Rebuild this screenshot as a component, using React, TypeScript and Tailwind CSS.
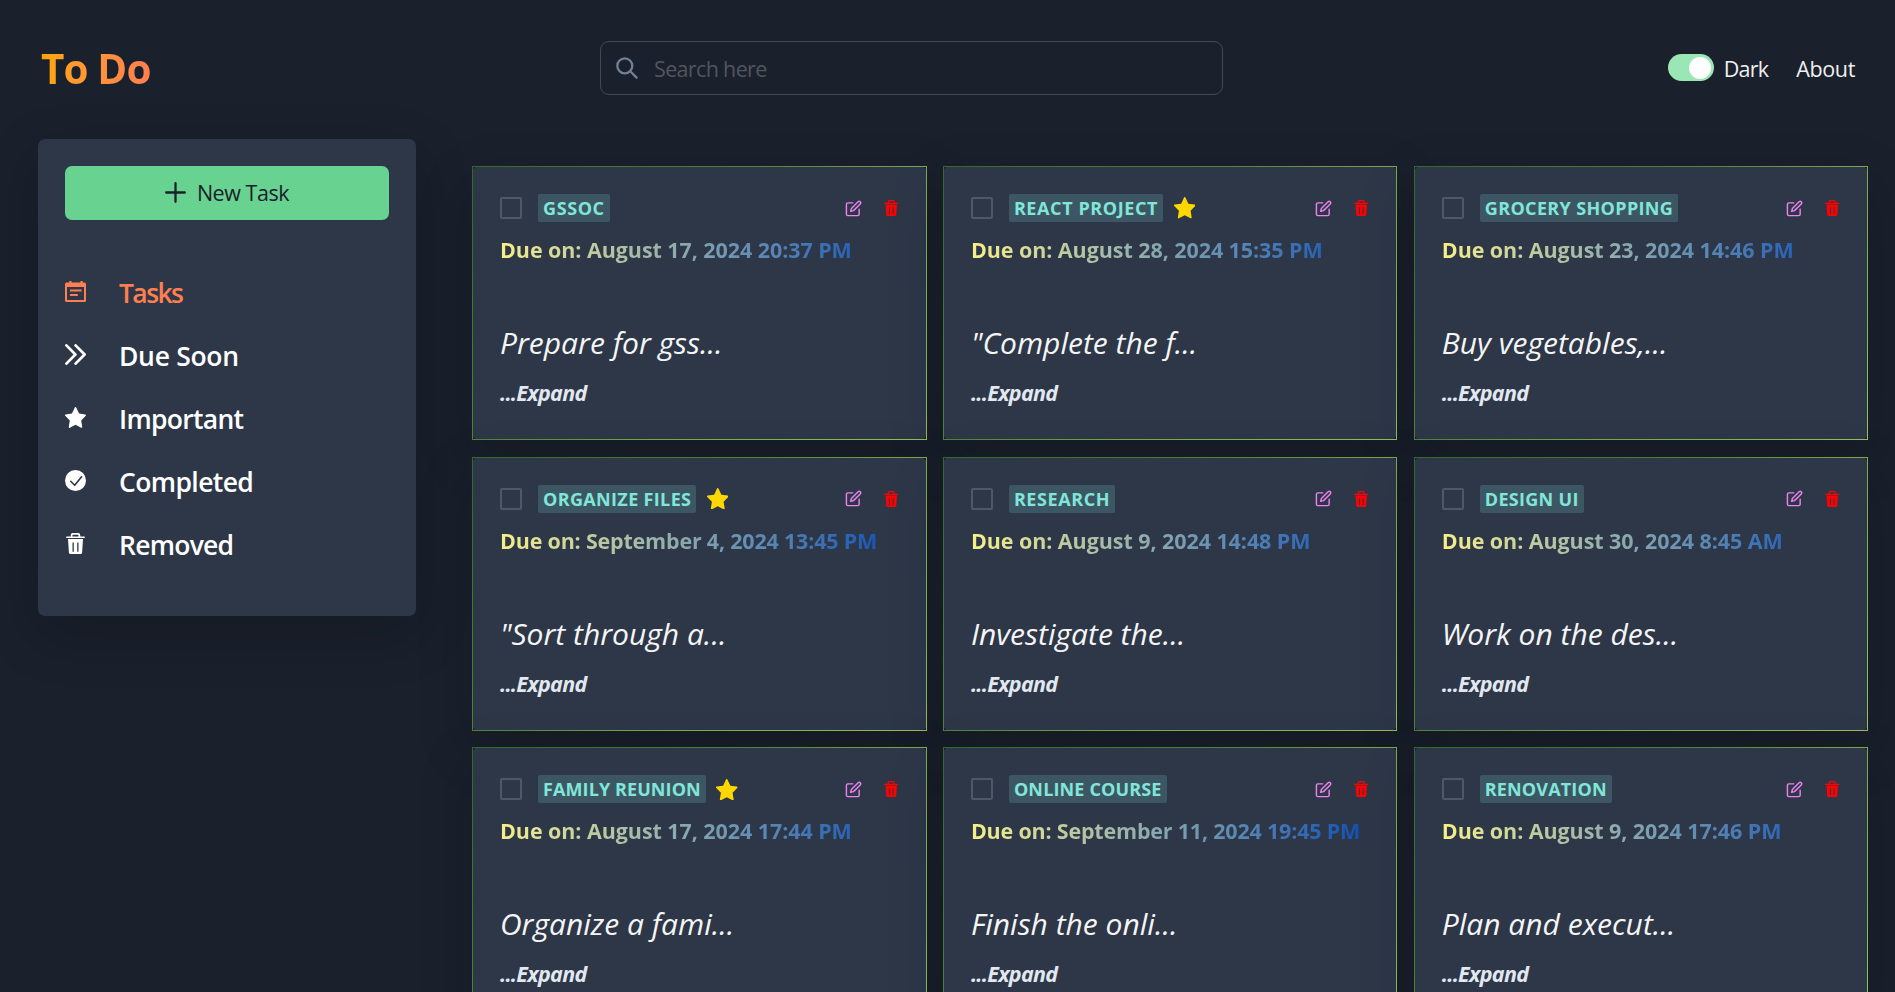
import { FiEdit } from "react-icons/fi";

type Task = { tag: string; due: string; text: string; starred?: boolean; tracking: string };

const tasks: Task[] = [
  { tag: "GSSOC", due: "August 17, 2024 20:37 PM", text: "Prepare for gss...", tracking: "tracking-[0.6px]" },
  { tag: "REACT PROJECT", due: "August 28, 2024 15:35 PM", text: '"Complete the f...', starred: true, tracking: "tracking-[0.6px]" },
  { tag: "GROCERY SHOPPING", due: "August 23, 2024 14:46 PM", text: "Buy vegetables,...", tracking: "tracking-[0.35px]" },
  { tag: "ORGANIZE FILES", due: "September 4, 2024 13:45 PM", text: '"Sort through a...', starred: true, tracking: "tracking-[0.35px]" },
  { tag: "RESEARCH", due: "August 9, 2024 14:48 PM", text: "Investigate the...", tracking: "tracking-[0.6px]" },
  { tag: "DESIGN UI", due: "August 30, 2024 8:45 AM", text: "Work on the des...", tracking: "tracking-[0.3px]" },
  { tag: "FAMILY REUNION", due: "August 17, 2024 17:44 PM", text: "Organize a fami...", starred: true, tracking: "tracking-[0.1px]" },
  { tag: "ONLINE COURSE", due: "September 11, 2024 19:45 PM", text: "Finish the onli...", tracking: "tracking-[0.15px]" },
  { tag: "RENOVATION", due: "August 9, 2024 17:46 PM", text: "Plan and execut...", tracking: "tracking-[0.15px]" },
];

function StarIcon({ className }: { className?: string }) {
  return (
    <svg viewBox="88 64 848 818" preserveAspectRatio="none" fill="currentColor" className={className}>
      <path d="M908.1 353.1l-253.9-36.9L540.7 86.1c-3.1-6.3-8.2-11.4-14.5-14.5-15.8-7.8-35-1.3-42.9 14.5L369.8 316.2l-253.9 36.9c-7 1-13.4 4.3-18.3 9.3a32.05 32.05 0 0 0 .6 45.3l183.7 179.1-43.4 252.9a31.95 31.95 0 0 0 46.4 33.7L512 754l227.1 119.4c6.2 3.3 13.4 4.4 20.3 3.2 17.4-3 29.1-19.5 26.1-36.9l-43.4-252.9 183.7-179.1c5-4.9 8.3-11.3 9.3-18.3 2.7-17.5-9.5-33.7-27-36.3z" />
    </svg>
  );
}

function TrashIcon({ className }: { className?: string }) {
  return (
    <svg viewBox="0 0 19 21" className={className}>
      <path d="M5.6 4V2.2Q5.6.9 6.9.9h5.2q1.3 0 1.3 1.3V4" fill="none" stroke="currentColor" strokeWidth="1.7" />
      <path d="M0 4.3Q0 3.5.8 3.5h17.4q.8 0 .8.8t-.8.8H.8Q0 5.1 0 4.3z" fill="currentColor" />
      <path
        fillRule="evenodd"
        fill="currentColor"
        d="M2 6h15l-.9 13.5q-.1 1.5-1.6 1.5h-10q-1.5 0-1.6-1.5zM6.5 9.6v9.2h1.3V9.6zM11.2 9.6v9.2h1.3V9.6z"
      />
    </svg>
  );
}

function CalendarIcon() {
  return (
    <svg viewBox="0 0 21 21" className="h-[21px] w-[21px]">
      <path
        fill="currentColor"
        fillRule="evenodd"
        d="M4.3 0h2.2v1.6h9V0h2.2v1.6h1.8Q21 1.6 21 3.1v16.4q0 1.5-1.5 1.5h-18Q0 21 0 19.5V3.1Q0 1.6 1.5 1.6h2.8zM2 6v13h17V6z"
      />
      <path d="M5 9.6h11.6M5 14h7.8" stroke="currentColor" strokeWidth="2" />
    </svg>
  );
}

function ChevronsIcon() {
  return (
    <svg viewBox="0 0 21 21" className="h-[21px] w-[21px]" fill="none" stroke="currentColor" strokeWidth="2.7" strokeLinecap="round" strokeLinejoin="round">
      <path d="M1.4 1.4l9 9.1-9 9.1M10.6 1.4l9 9.1-9 9.1" />
    </svg>
  );
}

function CheckIcon() {
  return (
    <svg viewBox="0 0 21 21" className="h-[21px] w-[21px]">
      <circle cx="10.5" cy="10.5" r="10.5" fill="currentColor" />
      <path d="M5.7 11.3l4 4 6.9-8.5" fill="none" stroke="#2d3748" strokeWidth="1.6" strokeLinecap="round" strokeLinejoin="round" />
    </svg>
  );
}

const nav = [
  { label: "Tasks", icon: <CalendarIcon />, style: "text-[#ff7f50] tracking-[-1.6px]" },
  { label: "Due Soon", icon: <ChevronsIcon />, style: "text-white tracking-[-0.3px]" },
  { label: "Important", icon: <StarIcon className="h-[21px] w-[21px]" />, style: "text-white tracking-[-0.7px]" },
  { label: "Completed", icon: <CheckIcon />, style: "text-white tracking-[-0.6px]" },
  { label: "Removed", icon: <TrashIcon className="h-[21px] w-[19px]" />, style: "text-white tracking-[-0.75px]" },
];

function Header() {
  return (
    <header className="flex h-[136px] shrink-0 items-center pr-[40px] pl-[41px]">
      <div className="w-[559px] pt-[2px]">
        <h1 className="inline-block bg-linear-to-r from-[#ffa500] to-[#ff7f50] bg-clip-text text-[40.5px] leading-[60px] font-bold tracking-[-0.9px] text-transparent">
          To Do
        </h1>
      </div>
      <div className="flex h-[54px] w-[623px] items-center gap-[16px] rounded-[9px] border border-white/18 pl-[15px]">
        <svg viewBox="0 0 22 22" className="h-[22px] w-[22px] text-[#718096]" fill="none" stroke="currentColor" strokeWidth="2.3" strokeLinecap="round">
          <circle cx="8.8" cy="8.8" r="7.5" />
          <path d="M14.2 14.2l6.4 6.4" />
        </svg>
        <span className="pt-[2px] text-[21.5px] leading-8 tracking-[-0.65px] text-[#51565f]">Search here</span>
      </div>
      <div className="ml-auto flex items-center">
        <div className="mb-px flex h-[27px] w-[46px] items-center justify-end rounded-full bg-[#9ae6b4] pr-[3px]">
          <div className="h-[22px] w-[22px] rounded-full bg-white" />
        </div>
        <span className="ml-[10px] pt-[2px] text-[21.5px] leading-8 tracking-[-0.8px] text-[#f0f0f0]">Dark</span>
        <span className="ml-[28px] pt-[2px] text-[21.5px] leading-8 tracking-[-0.35px] text-[#f0f0f0]">About</span>
      </div>
    </header>
  );
}

function Sidebar() {
  return (
    <aside className="h-[477px] w-[378px] shrink-0 rounded-[7px] bg-[#2d3748] p-[27px] shadow-[0_18px_56px_rgba(0,0,0,0.18)]">
      <button className="flex h-[54px] w-full items-center justify-center gap-[11px] rounded-[7px] bg-[#68d391] text-[21.5px] tracking-[-0.45px] text-[#1a202c]">
        <svg viewBox="0 0 21 21" className="mb-px h-[21px] w-[21px]" stroke="currentColor" strokeWidth="2.3" strokeLinecap="round">
          <path d="M10.5 1.2v18.6M1.2 10.5h18.6" />
        </svg>
        New Task
      </button>
      <nav className="mt-[52px] flex flex-col gap-[21px]">
        {nav.map(({ label, icon, style }) => (
          <div key={label} className={`flex h-[42px] items-center text-[26.5px] leading-[42px] font-semibold ${style}`}>
            <span className="mr-[33px] mb-[3px] flex w-[21px] justify-center">{icon}</span>
            {label}
          </div>
        ))}
      </nav>
    </aside>
  );
}

function Card({ task }: { task: Task }) {
  return (
    <article className="h-[273.9px] rounded-[7px] border bg-[#2d3748] p-[27px] shadow-[0_18px_56px_rgba(0,0,0,0.17)] [border-image:linear-gradient(135deg,#2f6b2d,#4f8439_38%,#7ba74f_62%,#94c060)_1]">
      <div className="flex h-[28px] items-center">
        <span className="h-[22px] w-[22px] rounded-[2px] border-2 border-white/17" />
        <span className={`ml-[16px] rounded-[2px] bg-[#81e6d9]/19 px-[5px] text-[18px] leading-[28px] font-bold text-[#81e6d9] ${task.tracking}`}>
          {task.tag}
        </span>
        {task.starred && <StarIcon className="ml-[10.5px] h-[21.5px] w-[21.5px] text-[#ffd700]" />}
        <FiEdit className="ml-auto h-[17px] w-[17px] text-[#ee82ee]" />
        <TrashIcon className="mr-[0.5px] ml-[22px] h-[16px] w-[14.5px] text-[#ff0000]" />
      </div>
      <p
        className={`mt-[11px] bg-linear-to-r from-[#f8f087] to-[#094bb6] bg-clip-text text-[21.5px] leading-[34px] font-bold whitespace-pre text-transparent ${task.due.startsWith("September") ? "tracking-[-0.2px]" : "tracking-[-0.07px]"}`}
      >
        Due on: {task.due}
      </p>
      <p className="mt-[53px] text-[30px] leading-[45px] text-[#f5f5f5] italic">{task.text}</p>
      <p className="mt-[11px] text-[21.5px] leading-[34px] font-bold tracking-[-0.7px] text-[#e2e8f0] italic">...Expand</p>
    </article>
  );
}

export default function App() {
  return (
    <div className="flex h-[992px] w-[1895px] flex-col overflow-hidden bg-[#1a202c] font-['Open_Sans','Noto_Sans',sans-serif]">
      <Header />
      <main className="mt-[3px] flex pl-[38px]">
        <Sidebar />
        <section className="mt-[27px] ml-[56px] grid w-[1396.35px] shrink-0 grid-cols-3 gap-x-[16.35px] gap-y-[16.85px]">
          {tasks.map((task) => (
            <Card key={task.tag} task={task} />
          ))}
        </section>
      </main>
    </div>
  );
}
